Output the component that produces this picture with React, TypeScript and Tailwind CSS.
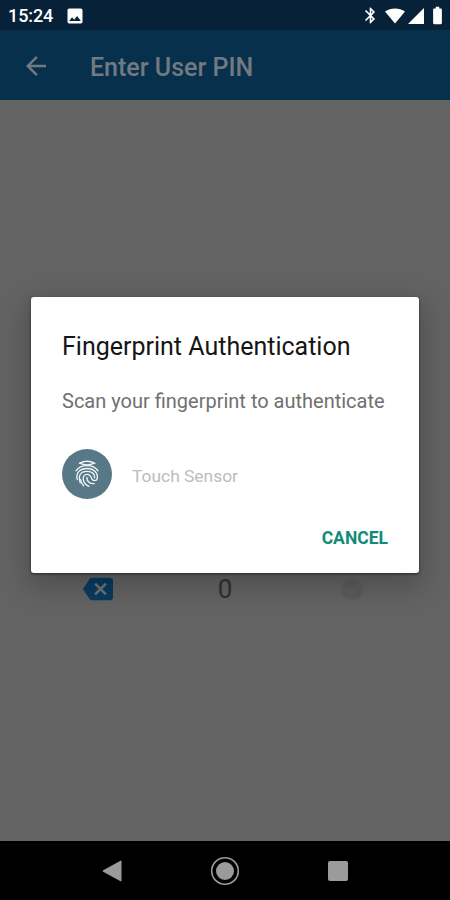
import React from 'react';
import {
  MdArrowBack,
  MdBackspace,
  MdBatteryFull,
  MdBluetooth,
  MdCheckCircle,
  MdImage,
} from 'react-icons/md';

const StatusBar: React.FC = () => (
  <div className="flex h-[30px] items-center bg-[#062138] pl-[8px] pr-[2px] text-white">
    <span className="mt-[2px] w-[57px] whitespace-nowrap text-[18px] font-medium leading-none tracking-[-0.1px]">15:24</span>
    <MdImage size={20} className="mt-[2px]" />
    <div className="ml-auto mt-px flex items-center">
      <MdBluetooth size={19} />
      <svg className="ml-[5px]" width="20" height="16" viewBox="0 0 21 16" fill="currentColor">
        <path d="M0 3.4C6 -1 15 -1 21 3.4L10.5 16Z" />
      </svg>
      <svg className="ml-[3px]" width="16" height="16" viewBox="0 0 16 16" fill="currentColor">
        <path d="M16 0V16H0Z" />
      </svg>
      <MdBatteryFull size={21} className="ml-[3px]" />
    </div>
  </div>
);

const Header: React.FC = () => (
  <div className="flex h-[70px] items-center bg-[#07304d] pl-[21px] text-[#737980]">
    <MdArrowBack size={30} className="mt-px" />
    <h1 className="ml-[39px] mt-[4px] text-[25px] font-medium leading-none">Enter User PIN</h1>
  </div>
);

const PinRow: React.FC = () => (
  <div className="flex h-[40px] items-center px-[35px]">
    <div className="flex w-[126px] justify-center">
      <div className="relative flex">
        <span className="absolute left-[10px] top-[6px] h-[17px] w-[16px] bg-[#707478]" />
        <MdBackspace size={30} className="relative text-[#083b60]" />
      </div>
    </div>
    <span className="w-[128px] text-center text-[26px] leading-none text-[#303030]">0</span>
    <div className="flex w-[126px] justify-center">
      <MdCheckCircle size={25} className="text-[#5b5b5b] blur-[1px]" />
    </div>
  </div>
);

const FingerprintIcon: React.FC = () => (
  <svg
    width="26"
    height="28"
    viewBox="0 0 26 28"
    fill="none"
    stroke="#eef6f9"
    strokeWidth="1.35"
    strokeLinecap="round"
  >
    <path d="M5.5 3.2Q13 -0.6 20.5 3.2Q13 6.6 5.5 3.2" />
    <path d="M2 10.8C4.8 6.9 8.6 5.6 13 5.6S21.2 6.9 24 10.8" />
    <path d="M3.2 19.5C1.6 12.5 6.2 8.5 13 8.5S24.4 13 23.2 18.6C22.6 21.2 18.8 21.4 17.8 18.8C17 16.6 16.2 14.4 13 14.4S8.6 17.4 9.4 20.2C10.2 23 12 25.2 15 26.4" />
    <path d="M6.2 22.8C4 15.8 6.2 11.4 13 11.4S20.8 15.6 20.6 17.8" />
    <path d="M9.6 25.8C8.2 24.4 7 22.4 6.4 19.4" />
    <path d="M12.8 17.4C13 21.6 16 24.2 20.2 23.6" />
  </svg>
);

const FingerprintDialog: React.FC = () => (
  <div className="absolute left-[31px] top-[297px] h-[276px] w-[388px] rounded-[3px] bg-white px-[31px] shadow-[0_10px_28px_4px_rgba(0,0,0,0.22),0_1px_3px_rgba(0,0,0,0.5)]">
    <h2 className="pt-[36px] text-[25px] leading-[28px] text-[#151515]">Fingerprint Authentication</h2>
    <p className="mt-[28px] whitespace-nowrap text-[20px] leading-[24px] text-[#707070]">
      Scan your fingerprint to authenticate
    </p>
    <div className="mt-[36px] flex items-center">
      <div className="flex h-[50px] w-[50px] items-center justify-center rounded-full bg-[#587888]">
        <FingerprintIcon />
      </div>
      <span className="ml-[20px] mt-[6px] text-[17.4px] leading-none text-[#bdbdbd]">Touch Sensor</span>
    </div>
    <div className="mt-[28px] flex justify-end">
      <button className="text-[17.5px] font-bold leading-[22px] text-[#138a7a]">CANCEL</button>
    </div>
  </div>
);

const NavBar: React.FC = () => (
  <div className="flex h-[59px] items-center justify-center gap-[78px] bg-black text-[#9b9b9b]">
    <svg width="40" height="30" viewBox="0 0 40 30" fill="currentColor">
      <path d="M11.2 14.2 28.5 4.7Q29.5 4.3 29.5 5.3V24.7Q29.5 25.7 28.5 25.2L11.2 15.8Q10 15 11.2 14.2Z" />
    </svg>
    <svg width="30" height="30" viewBox="0 0 30 30" fill="currentColor">
      <circle cx="15" cy="15" r="13.3" fill="none" stroke="currentColor" strokeWidth="1.6" />
      <circle cx="15" cy="15" r="9" />
    </svg>
    <div className="flex w-[40px] justify-center">
      <span className="h-[20px] w-[20px] rounded-[2px] bg-[#9b9b9b]" />
    </div>
  </div>
);

const App: React.FC = () => {
  return (
    <div className="relative flex h-[900px] w-[450px] flex-col overflow-hidden bg-[#636363] font-['Roboto',sans-serif]">
      <StatusBar />
      <Header />
      <div className="flex-1 pt-[469px]">
        <PinRow />
      </div>
      <FingerprintDialog />
      <div className="relative">
        <NavBar />
      </div>
    </div>
  );
};

export default App;
